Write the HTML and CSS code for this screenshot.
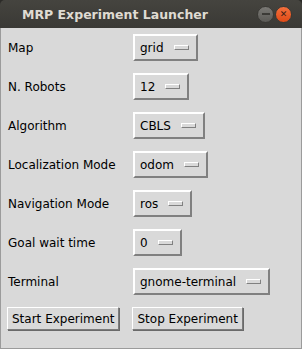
FILE: index.html
```html
<!DOCTYPE html>
<html>
<head>
<meta charset="utf-8">
	<title>MRP Experiment Launcher</title>
	<link rel="stylesheet" href="styles.css">
</head>
<body>
<div class="window">
	<div class="titlebar">
		<span class="title">MRP Experiment Launcher</span>
		<span class="btn-min"><i></i></span>
		<span class="btn-close">&#x2715;</span>
	</div>
	<div class="client">
		<div class="form">
			<label>Map</label>
			<div class="menubtn"><span>grid</span><i></i></div>
			<label>N. Robots</label>
			<div class="menubtn"><span>12</span><i></i></div>
			<label>Algorithm</label>
			<div class="menubtn"><span>CBLS</span><i></i></div>
			<label>Localization Mode</label>
			<div class="menubtn"><span>odom</span><i></i></div>
			<label>Navigation Mode</label>
			<div class="menubtn"><span>ros</span><i></i></div>
			<label>Goal wait time</label>
			<div class="menubtn"><span>0</span><i></i></div>
			<label>Terminal</label>
			<div class="menubtn"><span>gnome-terminal</span><i></i></div>
		</div>
		<div class="actions">
			<button>Start Experiment</button>
			<button>Stop Experiment</button>
		</div>
	</div>
</div>
</body>
</html>
```

FILE: styles.css
```css
*{margin: 0;padding: 0;box-sizing: border-box;}
body{
	background: #2c2b28;
	font-family: "DejaVu Sans", sans-serif;
	font-size: 12px;
	color: #000;
}
.window{
	width: 302px;
	height: 349px;
	display: flex;
	flex-direction: column;
}
/* 标题栏 */
.titlebar{
	height: 28px;
	background: linear-gradient(#45443f, #3a3935);
	border-radius: 5px 5px 0 0;
	display: flex;
	align-items: center;
	padding-left: 22px;
}
.title{
	font-family: "DejaVu Sans", sans-serif;
	font-weight: bold;
	font-size: 12.5px;
	color: #dfdbd2;
	flex: 1;
}
.btn-min, .btn-close{
	width: 17px;
	height: 17px;
	border-radius: 50%;
	display: flex;
	align-items: center;
	justify-content: center;
}
.btn-min{
	background: linear-gradient(#7a7975, #5b5a56);
	border: 1px solid #3a3935;
	margin-right: 1px;
}
.btn-min i{
	width: 8px;
	height: 2px;
	background: #3c3b37;
}
.btn-close{
	background: linear-gradient(#f4703d, #df4a16);
	border: 1px solid #3a3935;
	color: #3c2018;
	font-size: 9px;
	font-weight: bold;
	margin-right: 10px;
}
/* 内容区 */
.client{
	flex: 1;
	background: #d9d9d9;
	border: 1px solid #9b9b9b;
	border-top: none;
	padding: 6px 6px 0 6px;
}
.form{
	display: grid;
	grid-template-columns: 126px auto;
	row-gap: 12px;
	align-items: center;
	justify-items: start;
}
label{
	padding-left: 1px;
}
.menubtn{
	height: 27px;
	display: flex;
	align-items: center;
	padding: 0 7px 0 5px;
	border: 2px solid;
	border-color: #fff #808080 #808080 #fff;
	background: #d9d9d9;
}
.menubtn span{
	margin-right: 10px;
}
.menubtn i{
	width: 15px;
	height: 5px;
	border: 1px solid;
	border-color: #fff #808080 #808080 #fff;
	background: #d9d9d9;
}
.actions{
	display: flex;
	gap: 13px;
	margin-top: 12px;
}
button{
	font-family: "DejaVu Sans", sans-serif;
	font-size: 12px;
	height: 23px;
	padding: 0 4px;
	background: #d9d9d9;
	border: 1px solid;
	border-color: #fff #7c7c7c #7c7c7c #fff;
	box-shadow: 1px 1px 0 #6a6a6a;
	color: #000;
}
```
